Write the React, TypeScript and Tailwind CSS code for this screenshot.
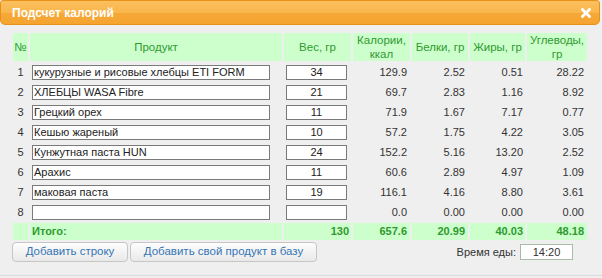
import React from "react";

type Row = {
  name: string;
  weight: string;
  kcal: string;
  protein: string;
  fat: string;
  carbs: string;
};

const ROWS: Row[] = [
  { name: "кукурузные и рисовые хлебцы ETI FORM", weight: "34", kcal: "129.9", protein: "2.52", fat: "0.51", carbs: "28.22" },
  { name: "ХЛЕБЦЫ WASA Fibre", weight: "21", kcal: "69.7", protein: "2.83", fat: "1.16", carbs: "8.92" },
  { name: "Грецкий орех", weight: "11", kcal: "71.9", protein: "1.67", fat: "7.17", carbs: "0.77" },
  { name: "Кешью жареный", weight: "10", kcal: "57.2", protein: "1.75", fat: "4.22", carbs: "3.05" },
  { name: "Кунжутная паста HUN", weight: "24", kcal: "152.2", protein: "5.16", fat: "13.20", carbs: "2.52" },
  { name: "Арахис", weight: "11", kcal: "60.6", protein: "2.89", fat: "4.97", carbs: "1.09" },
  { name: "маковая паста", weight: "19", kcal: "116.1", protein: "4.16", fat: "8.80", carbs: "3.61" },
  { name: "", weight: "", kcal: "0.0", protein: "0.00", fat: "0.00", carbs: "0.00" },
];

const COLS = "grid grid-cols-[15px_252px_67px_57px_56px_55px_60px] gap-x-[2px]";

const head = "flex items-center justify-center bg-[#ccffcc] text-center text-[11.5px] leading-[14px] text-[#2f9a2f]";
const num = "flex items-center justify-end pr-[3px]";
const total = "flex items-center justify-end bg-[#ccffcc] pr-[2px] font-bold text-[#2f9a2f]";

function CloseIcon() {
  return (
    <svg width="10" height="10" viewBox="0 0 10 10" className="block">
      <path d="M1.5 1.5 L8.5 8.5 M8.5 1.5 L1.5 8.5" stroke="#fff" strokeWidth="2.8" strokeLinecap="square" />
    </svg>
  );
}

export default function App() {
  return (
    <div className="h-[278px] w-[602px] overflow-hidden bg-[#efefef] font-['Liberation_Sans',Arial,sans-serif] text-[11px] text-[#333]">
      {/* Title bar */}
      <div className="mr-[2px] flex h-[25px] items-center justify-between rounded-b-[5px] rounded-t-[3px] border border-[#e8921c] bg-[linear-gradient(to_bottom,#fbbf5e_0%,#f9b64c_50%,#f6a837_52%,#f5a430_100%)] pl-[11px] pr-[8px]">
        <span className="text-[12px] font-bold text-white">Подсчет калорий</span>
        <CloseIcon />
      </div>

      <div className="pl-[13px] pt-[8px]">
        {/* Header */}
        <div className={`${COLS} h-[28px]`}>
          <div className={head}>№</div>
          <div className={head}>Продукт</div>
          <div className={head}>Вес, гр</div>
          <div className={head}>
            Калории,
            <br />
            ккал
          </div>
          <div className={head}>Белки, гр</div>
          <div className={head}>Жиры, гр</div>
          <div className={head}>
            Углеводы,
            <br />
            гр
          </div>
        </div>

        {/* Rows */}
        <div className="mt-[2px] flex flex-col gap-y-[2px]">
          {ROWS.map((r, i) => (
            <div key={i} className={`${COLS} h-[18px]`}>
              <div className="flex items-center justify-center">{i + 1}</div>
              <div className="flex items-center pl-[2px]">
                <div className="flex h-[15px] w-[238px] items-center border border-[#7a7a7a] bg-white pl-[1px] leading-none text-[#222]">
                  {r.name}
                </div>
              </div>
              <div className="flex items-center pl-[2px]">
                <div className="flex h-[15px] w-[61px] items-center justify-center border border-[#7a7a7a] bg-white leading-none text-[#222]">
                  {r.weight}
                </div>
              </div>
              <div className={num}>{r.kcal}</div>
              <div className={num}>{r.protein}</div>
              <div className="flex items-center justify-end pr-[2px]">{r.fat}</div>
              <div className={num}>{r.carbs}</div>
            </div>
          ))}

          {/* Totals */}
          <div className={`${COLS} h-[16px]`}>
            <div className="bg-[#ccffcc]" />
            <div className="flex items-center bg-[#ccffcc] pl-[2px] font-bold text-[#2f9a2f]">Итого:</div>
            <div className={total}>130</div>
            <div className={`${total} pr-[3px]`}>657.6</div>
            <div className={`${total} pr-[3px]`}>20.99</div>
            <div className={total}>40.03</div>
            <div className={`${total} pr-[3px]`}>48.18</div>
          </div>
        </div>
      </div>

      {/* Footer */}
      <div className="mt-[3px] flex h-[20px] items-center pl-[12px] pr-[29px]">
        <button className="h-[20px] w-[116px] rounded-[4px] border border-[#c6c6c6] bg-gradient-to-b from-[#fdfdfd] to-[#e9e9e9] text-[11.5px] text-[#3575b5]">
          Добавить строку
        </button>
        <button className="ml-[2px] h-[20px] w-[187px] rounded-[4px] border border-[#c6c6c6] bg-gradient-to-b from-[#fdfdfd] to-[#e9e9e9] text-[11.5px] text-[#3575b5]">
          Добавить свой продукт в базу
        </button>
        <div className="ml-auto flex items-center gap-[4px]">
          <span>Время еды:</span>
          <div className="flex h-[16px] w-[53px] items-center justify-center border border-[#a9bba9] bg-white">14:20</div>
        </div>
      </div>

      <div className="mt-[13px] border-t border-[#dcdcdc]" />
    </div>
  );
}
